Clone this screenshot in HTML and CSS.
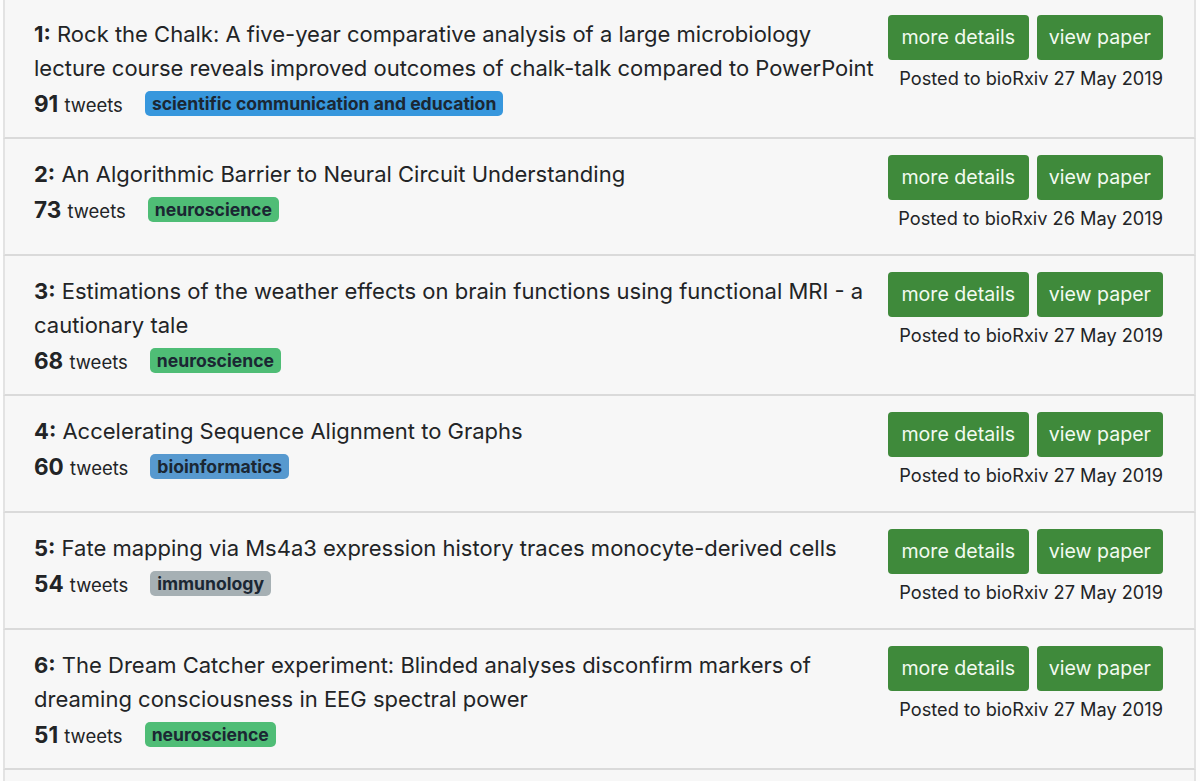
FILE: index.html
```html
<!DOCTYPE html>
<html lang="en">
<head>
<meta charset="utf-8">
<title>Top bioRxiv papers</title>
<link rel="stylesheet" href="styles.css">
</head>
<body>
<div class="list">
  <div class="item">
    <div class="main">
      <div class="title"><b>1:</b> Rock the Chalk: A five-year comparative analysis of a large microbiology lecture course reveals improved outcomes of chalk-talk compared to PowerPoint</div>
      <div class="meta"><span class="count"><b>91</b> tweets</span><span class="badge b-sci">scientific communication and education</span></div>
    </div>
    <div class="side">
      <div class="btns"><a class="btn btn-more" href="#">more details</a><a class="btn btn-view" href="#">view paper</a></div>
      <div class="posted">Posted to bioRxiv 27 May 2019</div>
    </div>
  </div>
  <div class="item">
    <div class="main">
      <div class="title"><b>2:</b> An Algorithmic Barrier to Neural Circuit Understanding</div>
      <div class="meta"><span class="count"><b>73</b> tweets</span><span class="badge b-neuro">neuroscience</span></div>
    </div>
    <div class="side">
      <div class="btns"><a class="btn btn-more" href="#">more details</a><a class="btn btn-view" href="#">view paper</a></div>
      <div class="posted">Posted to bioRxiv 26 May 2019</div>
    </div>
  </div>
  <div class="item">
    <div class="main">
      <div class="title"><b>3:</b> Estimations of the weather effects on brain functions using functional MRI - a cautionary tale</div>
      <div class="meta"><span class="count"><b>68</b> tweets</span><span class="badge b-neuro">neuroscience</span></div>
    </div>
    <div class="side">
      <div class="btns"><a class="btn btn-more" href="#">more details</a><a class="btn btn-view" href="#">view paper</a></div>
      <div class="posted">Posted to bioRxiv 27 May 2019</div>
    </div>
  </div>
  <div class="item">
    <div class="main">
      <div class="title"><b>4:</b> Accelerating Sequence Alignment to Graphs</div>
      <div class="meta"><span class="count"><b>60</b> tweets</span><span class="badge b-bioinf">bioinformatics</span></div>
    </div>
    <div class="side">
      <div class="btns"><a class="btn btn-more" href="#">more details</a><a class="btn btn-view" href="#">view paper</a></div>
      <div class="posted">Posted to bioRxiv 27 May 2019</div>
    </div>
  </div>
  <div class="item">
    <div class="main">
      <div class="title"><b>5:</b> Fate mapping via Ms4a3 expression history traces monocyte-derived cells</div>
      <div class="meta"><span class="count"><b>54</b> tweets</span><span class="badge b-immuno">immunology</span></div>
    </div>
    <div class="side">
      <div class="btns"><a class="btn btn-more" href="#">more details</a><a class="btn btn-view" href="#">view paper</a></div>
      <div class="posted">Posted to bioRxiv 27 May 2019</div>
    </div>
  </div>
  <div class="item">
    <div class="main">
      <div class="title"><b>6:</b> The Dream Catcher experiment: Blinded analyses disconfirm markers of dreaming consciousness in EEG spectral power</div>
      <div class="meta"><span class="count"><b>51</b> tweets</span><span class="badge b-neuro">neuroscience</span></div>
    </div>
    <div class="side">
      <div class="btns"><a class="btn btn-more" href="#">more details</a><a class="btn btn-view" href="#">view paper</a></div>
      <div class="posted">Posted to bioRxiv 27 May 2019</div>
    </div>
  </div>
  <div class="item item-empty"></div>
</div>
</body>
</html>
```
FILE: styles.css
```css
html, body {
  margin: 0;
  padding: 0;
  background: #fdfdfd;
}
body {
  font-family: "Inter", "Noto Sans", sans-serif;
  color: #222426;
  overflow: hidden;
  height: 781px;
}
.list {
  margin: -3px 4px 0 3px;
  border-top: 2px solid #dcdcdc;
}
.item {
  display: flex;
  align-items: flex-start;
  gap: 10px;
  padding: 18px 31px 21px 29px;
  background: #f7f7f7;
  border-left: 2px solid #e3e3e3;
  border-right: 2px solid #e3e3e3;
  border-bottom: 2px solid #dadada;
}
.item-empty {
  height: 120px;
}
.main {
  flex: 1;
  min-width: 0;
}
.title {
  font-size: 22px;
  line-height: 34px;
}
.title b {
  font-weight: 700;
}
.meta {
  display: flex;
  align-items: center;
  margin-top: 6px;
  height: 25px;
}
.count {
  font-size: 18.5px;
  margin-right: 22px;
}
.count b {
  font-size: 22.5px;
  font-weight: 700;
  margin-right: 1px;
}
.badge {
  display: inline-block;
  font-size: 17.6px;
  font-weight: 700;
  line-height: 25px;
  padding: 0 7px;
  border-radius: 5px;
  color: #1b2733;
}
.b-sci { background: #3797dd; }
.b-neuro { background: #4fbd76; }
.b-bioinf { background: #5799cf; }
.b-immuno { background: #a6b0b4; }
.side {
  display: flex;
  flex-direction: column;
  align-items: flex-end;
  margin-top: -2px;
}
.btns {
  display: flex;
  gap: 8px;
}
.btn {
  display: block;
  background: #3f8a3b;
  color: #f2faf0;
  text-decoration: none;
  font-size: 19.6px;
  line-height: 25px;
  padding: 10px 13px;
  border-radius: 4px;
}
.btn-more {
  padding: 10px 13.5px;
}
.btn-view {
  padding: 10px 12px;
}
.posted {
  margin: 6px 0 3px;
  font-size: 18.2px;
  line-height: 24px;
  white-space: nowrap;
}
```
